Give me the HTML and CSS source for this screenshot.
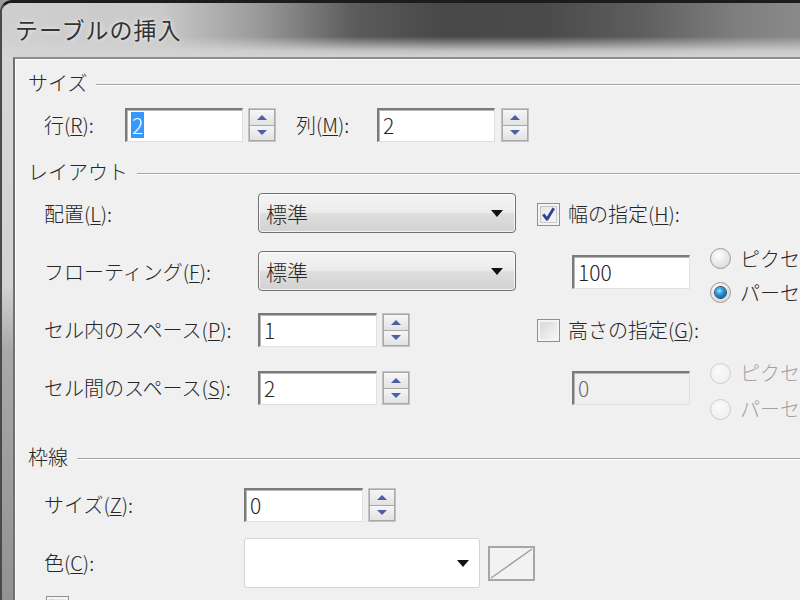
FILE: index.html
```html
<!DOCTYPE html>
<html lang="ja">
<head>
<meta charset="utf-8">
<title>テーブルの挿入</title>
<link rel="stylesheet" href="styles.css">
</head>
<body>
<div class="window">
  <div class="titlebar"><span class="title">テーブルの挿入</span></div>
  <div class="frame">
    <div class="dlg">
      <section class="group">
        <div class="ghead"><span>サイズ</span></div>
        <div class="size-row">
          <span class="lbl w81">行(<u>R</u>):</span>
          <div class="input w118"><span class="sel">2</span></div>
          <div class="spin"><span class="up"></span><span class="dn"></span></div>
          <span class="lbl w81 ml20">列(<u>M</u>):</span>
          <div class="input w118">2</div>
          <div class="spin ml6"><span class="up"></span><span class="dn"></span></div>
        </div>
      </section>

      <section class="group g2">
        <div class="ghead"><span>レイアウト</span></div>
        <div class="layout-grid">
          <span class="lbl">配置(<u>L</u>):</span>
          <div class="combo"><span>標準</span><i class="arrow"></i></div>
          <div class="right"><span class="cb checked"><svg viewBox="0 0 22 22" width="22" height="22"><path d="M5.5 11.5 L9.5 16.5 L16.5 5" fill="none" stroke="#30409a" stroke-width="3" stroke-linejoin="round"/></svg></span><span class="lbl">幅の指定(<u>H</u>):</span></div>

          <span class="lbl">フローティング(<u>F</u>):</span>
          <div class="combo"><span>標準</span><i class="arrow"></i></div>
          <div class="right">
            <div class="input w118 ml35">100</div>
            <div class="radios">
              <div class="ritem"><span class="rb"></span><span class="lbl">ピクセル</span></div>
              <div class="ritem"><span class="rb on"></span><span class="lbl">パーセント</span></div>
            </div>
          </div>

          <span class="lbl">セル内のスペース(<u>P</u>):</span>
          <div class="ctl"><div class="input w119">1</div><div class="spin"><span class="up"></span><span class="dn"></span></div></div>
          <div class="right"><span class="cb"></span><span class="lbl">高さの指定(<u>G</u>):</span></div>

          <span class="lbl">セル間のスペース(<u>S</u>):</span>
          <div class="ctl"><div class="input w119">2</div><div class="spin"><span class="up"></span><span class="dn"></span></div></div>
          <div class="right">
            <div class="input w118 ml35 disabled">0</div>
            <div class="radios dis">
              <div class="ritem"><span class="rb"></span><span class="lbl">ピクセル</span></div>
              <div class="ritem"><span class="rb"></span><span class="lbl">パーセント</span></div>
            </div>
          </div>
        </div>
      </section>

      <section class="group g3">
        <div class="ghead"><span>枠線</span></div>
        <div class="border-grid">
          <span class="lbl">サイズ(<u>Z</u>):</span>
          <div class="ctl"><div class="input w119">0</div><div class="spin"><span class="up"></span><span class="dn"></span></div></div>

          <span class="lbl">色(<u>C</u>):</span>
          <div class="ctl">
            <div class="colorbox"><i class="arrow"></i></div>
            <span class="swatch"><svg viewBox="0 0 43 31" width="43" height="31"><line x1="1" y1="30" x2="42" y2="1" stroke="#a2a2a2" stroke-width="1.5"/></svg></span>
          </div>
        </div>
        <div class="last-row"><span class="cb"></span></div>
      </section>
    </div>
  </div>
</div>
</body>
</html>
```
FILE: styles.css
```css
* { box-sizing: border-box; margin: 0; padding: 0; }
html, body { width: 800px; height: 600px; overflow: hidden; }
body {
  font-family: "Noto Sans CJK JP", "Noto Sans", sans-serif;
  font-weight: 300;
  color: #262626;
  background: #9a9a9a;
}
u { text-decoration: underline; text-underline-offset: 2px; text-decoration-thickness: 1px; }

.window {
  width: 800px;
  height: 600px;
  display: flex;
  flex-direction: column;
  border-top: 3px solid #1c1c1c;
  border-left: 2px solid #4a4a4a;
  border-top-left-radius: 12px;
  overflow: hidden;
  background: #d2d2d2;
}

.titlebar {
  height: 54px;
  flex: none;
  display: flex;
  align-items: center;
  padding-left: 13px;
  background:
    linear-gradient(to bottom, rgba(212,212,212,0) 0%, rgba(212,212,212,0) 62%, rgba(212,212,212,0.85) 88%, #d4d4d4 100%),
    linear-gradient(to right, #cfcfcf 0%, #c9c9c9 20%, #9a9a9a 32%, #5c5c5c 44%, #484848 55%, #4a4a4a 68%, #5e5e5e 80%, #7e7e7e 92%, #8a8a8a 100%);
}
.title {
  font-size: 23px;
  font-weight: 400;
  letter-spacing: 1px;
  color: #333333;
  text-shadow: 0 0 6px rgba(255,255,255,0.8), 0 0 2px rgba(255,255,255,0.6);
  margin-top: -2px;
}

.frame {
  flex: 1;
  display: flex;
  padding-left: 11px;
  background: linear-gradient(to bottom, #d6d6d6 0%, #d2d2d2 40%, #a8a8a8 52%, #909090 100%);
}

.dlg {
  flex: 1;
  background: #f0f0f0;
  border-top: 2px solid #8c8c8c;
  border-left: 2px solid #707070;
  box-shadow: inset 1px 1px 0 #fcfcfc;
  padding: 11px 0 0 13px;
  font-size: 20px;
}

.ghead {
  height: 26px;
  display: flex;
  align-items: center;
  font-size: 20px;
  line-height: 26px;
}
.ghead::after {
  content: "";
  flex: 1;
  margin-left: 9px;
  margin-top: 3px;
  border-top: 1px solid #a4a4a4;
  border-bottom: 1px solid #ffffff;
}

.lbl { white-space: nowrap; line-height: 26px; font-size: 20px; }
.w81 { width: 81px; flex: none; }
.ml20 { margin-left: 20px; }
.ml6 { margin-left: 6px !important; }
.ml35 { margin-left: 35px; }

.size-row {
  display: flex;
  align-items: center;
  height: 34px;
  margin-top: 12px;
  padding-left: 16px;
}

.input {
  height: 34px;
  background: #ffffff;
  border-top: 2px solid #7a7a7a;
  border-left: 2px solid #7a7a7a;
  border-right: 1px solid #e0e0e0;
  border-bottom: 1px solid #e0e0e0;
  box-shadow: inset 1px 1px 0 #b8b8b8;
  font-size: 21px;
  line-height: 30px;
  padding-left: 4px;
  flex: none;
}
.w118 { width: 118px; }
.w119 { width: 119px; }
.input.disabled { background: #f0f0f0; color: #6a6a6a; height: 34px; }
.sel { background: #3399ff; color: #fff; padding: 0 1px; display: inline-block; line-height: 26px; }

.spin {
  flex: none;
  width: 28px;
  height: 34px;
  margin-left: 5px;
  display: flex;
  flex-direction: column;
  border: 1px solid #c2c2c2;
  background: #e6e6e6;
}
.spin span {
  flex: 1;
  display: flex;
  align-items: center;
  justify-content: center;
  background: linear-gradient(to bottom, #f6f6f6, #e2e2e2);
  border: 1px solid #a8a8a8;
}
.spin .dn { border-top: 0; }
.spin .up::after {
  content: "";
  border-left: 5px solid transparent;
  border-right: 5px solid transparent;
  border-bottom: 5px solid #4d5ea6;
}
.spin .dn::after {
  content: "";
  border-left: 5px solid transparent;
  border-right: 5px solid transparent;
  border-top: 5px solid #4d5ea6;
}

.g2 { margin-top: 17px; }
.layout-grid {
  display: grid;
  grid-template-columns: 214px 258px 1fr;
  grid-auto-rows: 58px;
  align-items: center;
  padding-left: 16px;
}
.right { display: flex; align-items: center; padding-left: 21px; height: 100%; }
.right .cb { margin-right: 8px; }
.ctl { display: flex; align-items: center; }

.combo {
  height: 40px;
  margin-top: -2px;
  border: 1px solid #707070;
  border-radius: 4px;
  background: linear-gradient(to bottom, #f4f4f4 0%, #ececec 48%, #dedede 52%, #d2d2d2 100%);
  box-shadow: inset 0 0 0 1px rgba(255,255,255,0.7);
  display: flex;
  align-items: center;
  justify-content: space-between;
  padding: 0 12px 0 7px;
  font-size: 21px;
}
.arrow {
  display: block;
  width: 0;
  height: 0;
  border-left: 6px solid transparent;
  border-right: 6px solid transparent;
  border-top: 7px solid #111;
}

.cb {
  flex: none;
  display: inline-flex;
  width: 23px;
  height: 23px;
  border: 1px solid #8e8f8f;
  background: linear-gradient(135deg, #d4d4d4 0%, #e8e8e8 50%, #f8f8f8 100%);
  box-shadow: inset 0 0 0 2px #f4f4f4;
  align-items: center;
  justify-content: center;
}
.cb.checked { background: linear-gradient(135deg, #e4e4e4, #f8f8f8); box-shadow: inset 0 0 0 2px #f4f4f4, inset 0 0 0 3px #c8c8c8; }
.cb svg { display: block; }

.radios { display: flex; flex-direction: column; margin-left: 20px; margin-top: 7px; }
.ritem { display: flex; align-items: center; height: 34px; }
.rb {
  flex: none;
  width: 21px;
  height: 21px;
  border-radius: 50%;
  border: 1px solid #9a9a9a;
  background: radial-gradient(circle at 40% 35%, #ffffff 0%, #e6e6e6 55%, #cfcfcf 100%);
  margin-right: 9px;
  position: relative;
}
.rb.on::after {
  content: "";
  position: absolute;
  left: 4px; top: 4px;
  width: 11px; height: 11px;
  border-radius: 50%;
  background: radial-gradient(circle at 40% 35%, #9fe3ff 0%, #2ba0e0 35%, #0a5a9c 80%, #083b6c 100%);
  box-shadow: 0 0 0 1px #1d3f63;
}
.dis .ritem { height: 36px; }
.dis .rb { border-color: #cdcdcd; background: radial-gradient(circle at 40% 35%, #fafafa, #ececec); }
.dis .lbl { color: #a2a2a2; }
.right .radios.dis { margin-top: 6px; }

.g3 { margin-top: 27px; }
.border-grid {
  display: grid;
  grid-template-columns: 200px 1fr;
  grid-auto-rows: 58px;
  align-items: center;
  padding-left: 16px;
  margin-top: 6px;
}
.colorbox {
  width: 236px;
  height: 50px;
  background: #fff;
  border: 1px solid #d4d4d4;
  border-radius: 3px;
  display: flex;
  align-items: center;
  justify-content: flex-end;
  padding-right: 10px;
}
.swatch {
  width: 47px;
  height: 35px;
  margin-left: 8px;
  border: 2px solid #a6a6a6;
  background: #f2f2f2;
  display: block;
}
.swatch svg { display: block; }
.last-row { padding-left: 18px; margin-top: 4px; }
```
